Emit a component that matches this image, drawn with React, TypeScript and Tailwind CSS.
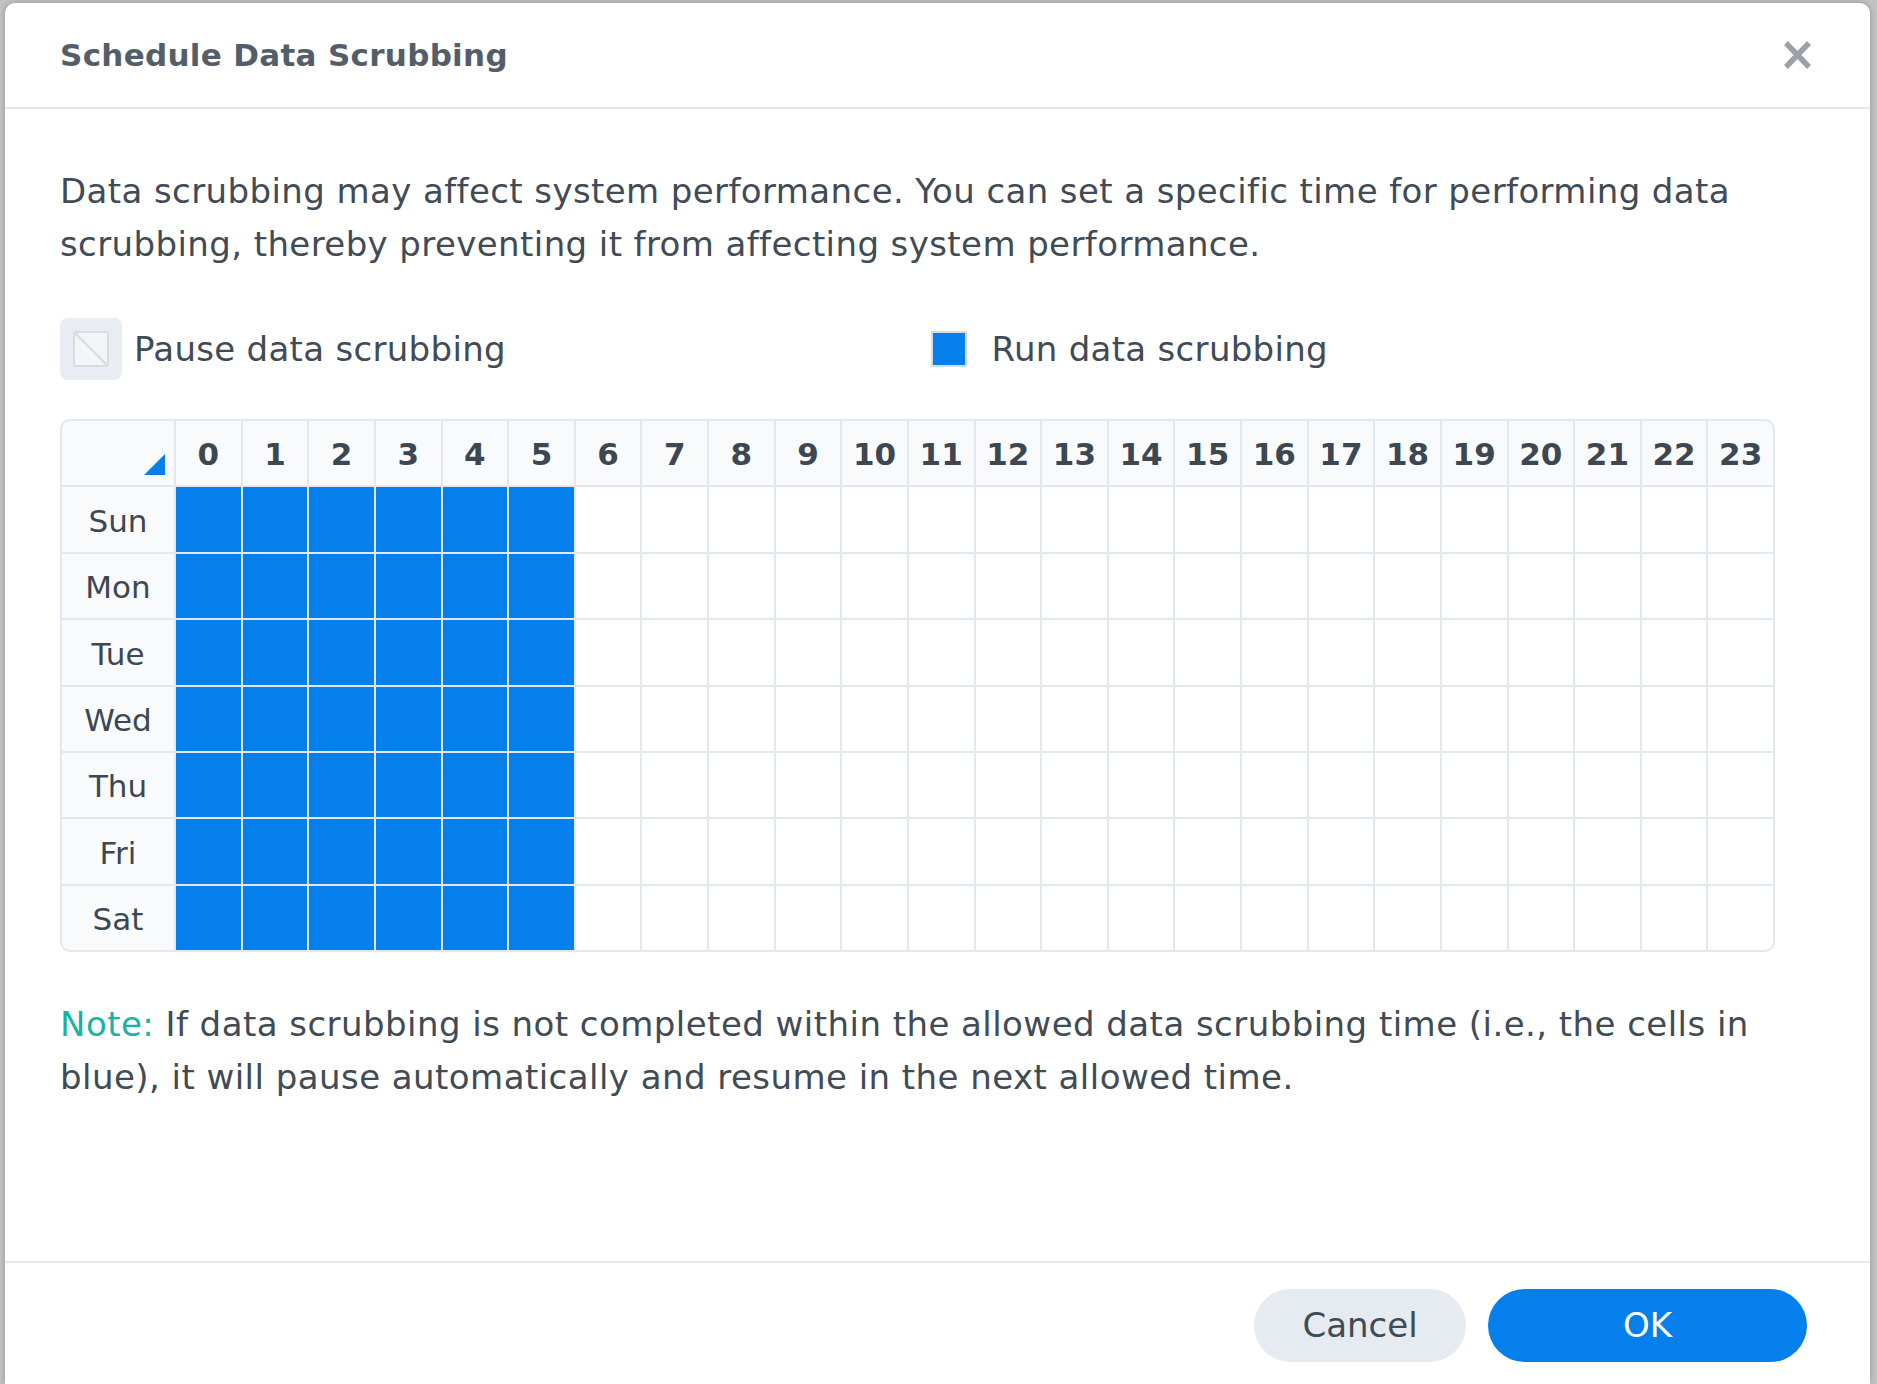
import React from "react";

const DAYS = ["Sun", "Mon", "Tue", "Wed", "Thu", "Fri", "Sat"];
const HOURS = Array.from({ length: 24 }, (_, i) => i);
// hours 0..5 are allowed every day
const isOn = (h: number) => h <= 5;

const font = { fontFamily: '"DejaVu Sans", Verdana, sans-serif' };

function CloseIcon() {
  return (
    <svg width="29" height="28" viewBox="0 0 29 28" className="shrink-0">
      <path d="M3 2 L26 26 M26 2 L3 26" stroke="#9ba1a8" strokeWidth="5.5" />
    </svg>
  );
}

function PauseSwatch() {
  return (
    <div className="flex h-[62px] w-[62px] items-center justify-center rounded-[8px] bg-[#e8edf3]">
      <div className="relative h-[36px] w-[36px] overflow-hidden rounded-[3px] border-2 border-[#d9dde2] bg-[#f4f5f6]">
        <svg className="absolute inset-0" width="32" height="32" viewBox="0 0 32 32">
          <path d="M0 0 L32 32" stroke="#d6d9dd" strokeWidth="2" />
        </svg>
      </div>
    </div>
  );
}

function RunSwatch() {
  return (
    <div className="flex h-[62px] w-[62px] items-center justify-center">
      <div className="h-[36px] w-[36px] border-2 border-[#d8dce1] bg-[#057feb]" />
    </div>
  );
}

function Schedule() {
  return (
    <div className="mt-[39px] h-[533px] w-[1715px] overflow-hidden rounded-[10px] border-2 border-[#e2e8ef] bg-[#e2e8ef]">
      <div className="grid h-full grid-cols-[112px_repeat(24,1fr)] grid-rows-[repeat(8,1fr)] gap-[2px] text-[31px] text-[#3d4752]">
        <div className="relative bg-[#f8fafc]">
          <svg className="absolute bottom-[10px] right-[9px]" width="21" height="21" viewBox="0 0 21 21">
            <polygon points="21,0 21,21 0,21" fill="#057feb" />
          </svg>
        </div>
        {HOURS.map((h) => (
          <div key={h} className="flex items-center justify-center bg-[#f8fafc] pt-[2px] font-bold">
            {h}
          </div>
        ))}
        {DAYS.map((d) => (
          <React.Fragment key={d}>
            <div className="flex items-center justify-center bg-[#f8fafc] pt-[3px]">{d}</div>
            {HOURS.map((h) => (
              <div key={h} className={isOn(h) ? "bg-[#057feb]" : "bg-white"} />
            ))}
          </React.Fragment>
        ))}
      </div>
    </div>
  );
}

export default function App() {
  return (
    <div className="h-[1384px] w-[1877px] overflow-hidden bg-[#c3c3c3] pl-[5px] pt-[3px]" style={font}>
      <div className="flex h-[1381px] w-[1865px] flex-col rounded-t-[10px] bg-white shadow-[0_0_6px_rgba(0,0,0,0.25)]">
        <header className="flex h-[106px] items-center justify-between border-b-2 border-[#e4e9ef] pl-[55px] pr-[58px]">
          <h1 className="text-[31px] font-bold tracking-[0.3px] text-[#545e69]">Schedule Data Scrubbing</h1>
          <CloseIcon />
        </header>

        <div className="flex-1 pl-[55px] pt-[56px] text-[#414b55]">
          <p className="w-[1715px] text-[34px] leading-[53px] tracking-[0.4px]">
            Data scrubbing may affect system performance. You can set a specific time for performing data
            scrubbing, thereby preventing it from affecting system performance.
          </p>

          <div className="mt-[47px] grid w-[1715px] grid-cols-2 text-[34px] tracking-[0.3px]">
            <div className="flex items-center gap-[12px]">
              <PauseSwatch />
              <span>Pause data scrubbing</span>
            </div>
            <div className="flex items-center gap-[12px]">
              <RunSwatch />
              <span>Run data scrubbing</span>
            </div>
          </div>

          <Schedule />

          <p className="mt-[46px] w-[1715px] text-[34px] leading-[53px] tracking-[0.45px]">
            <span className="text-[#17b3a3]">Note:</span> If data scrubbing is not completed within the allowed data
            scrubbing time (i.e., the cells in blue), it will pause automatically and resume in the next allowed time.
          </p>
        </div>

        <footer className="flex h-[123px] items-start justify-end gap-[22px] border-t-2 border-[#e4e9ef] pr-[63px] pt-[26px] text-[34px]">
          <button className="h-[73px] w-[212px] rounded-full bg-[#e6ebf1] text-[#414b55]">Cancel</button>
          <button className="h-[73px] w-[319px] rounded-full bg-[#057feb] text-white">OK</button>
        </footer>
      </div>
    </div>
  );
}
